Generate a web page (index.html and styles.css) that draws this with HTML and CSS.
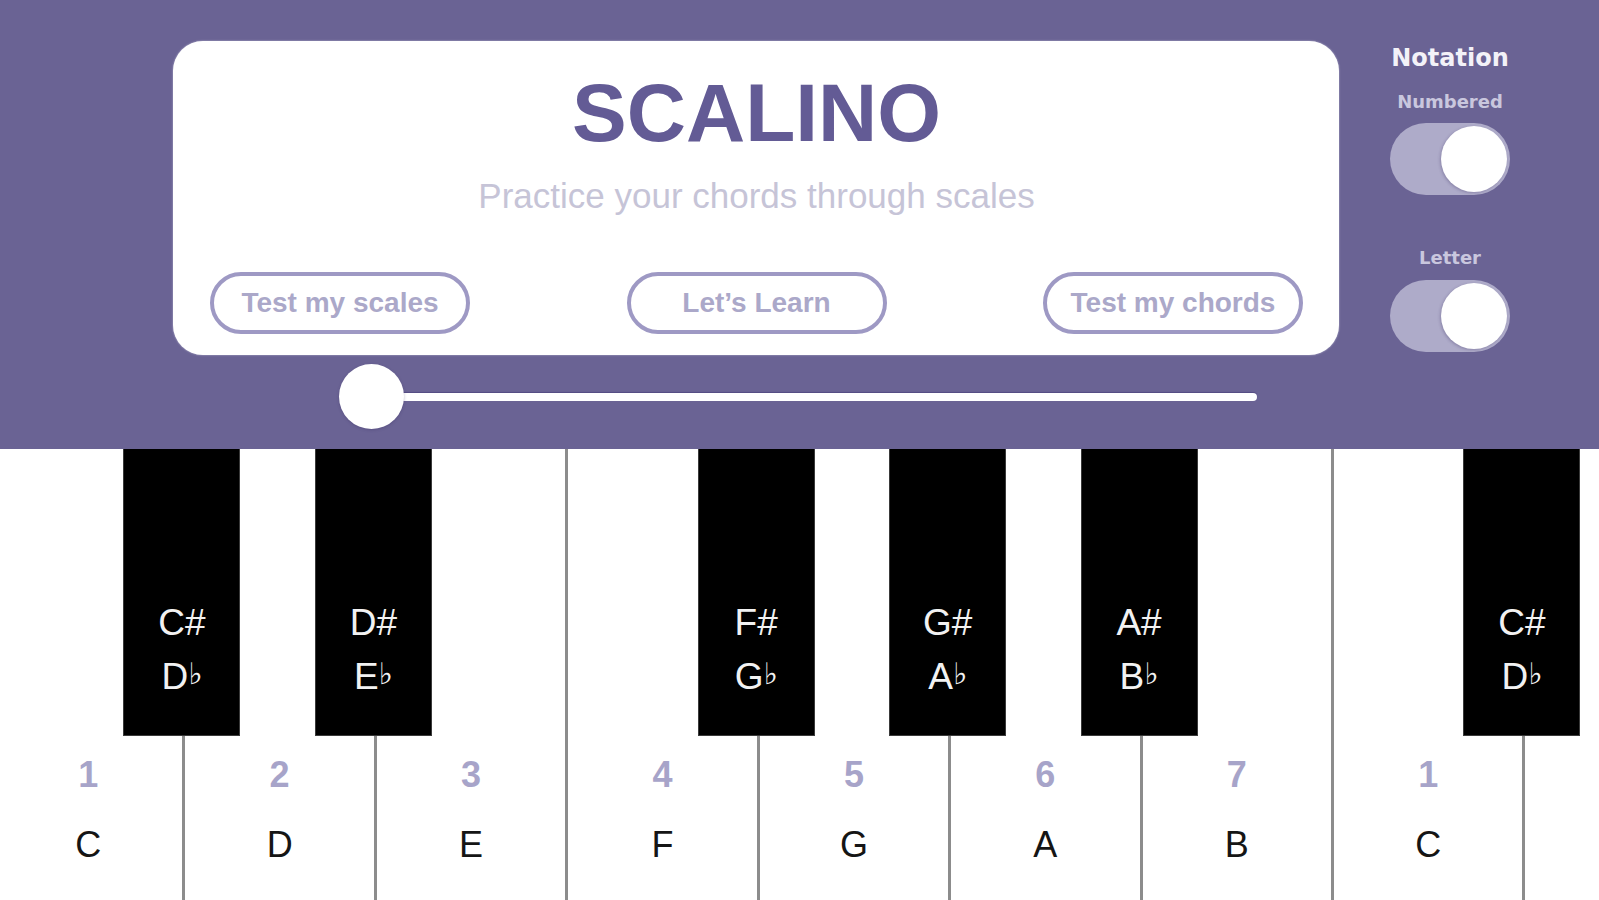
FILE: index.html
```html
<!DOCTYPE html>
<html lang="en">
<head>
<meta charset="utf-8">
<title>Scalino</title>
<link rel="stylesheet" href="styles.css">
</head>
<body>
<header class="header">
  <div class="main-col">
    <section class="card">
      <h1 class="title">SCALINO</h1>
      <p class="subtitle">Practice your chords through scales</p>
      <div class="actions">
        <button class="btn">Test my scales</button>
        <button class="btn">Let’s Learn</button>
        <button class="btn">Test my chords</button>
      </div>
    </section>
    <div class="slider">
      <div class="slider-thumb"></div>
      <div class="slider-track"></div>
    </div>
  </div>
  <aside class="side">
    <div class="side-title">Notation</div>
    <div class="side-label">Numbered</div>
    <div class="toggle"><div class="toggle-knob"></div></div>
    <div class="side-label side-label-2">Letter</div>
    <div class="toggle"><div class="toggle-knob"></div></div>
  </aside>
</header>
<main class="keyboard">
  <div class="keys">
    <div class="wkey">
      <div class="bkey"><span>C#</span><span>D<span class="flat">♭</span></span></div>
      <span class="num">1</span><span class="letter">C</span>
    </div>
    <div class="wkey">
      <div class="bkey"><span>D#</span><span>E<span class="flat">♭</span></span></div>
      <span class="num">2</span><span class="letter">D</span>
    </div>
    <div class="wkey">
      <span class="num">3</span><span class="letter">E</span>
    </div>
    <div class="wkey">
      <div class="bkey"><span>F#</span><span>G<span class="flat">♭</span></span></div>
      <span class="num">4</span><span class="letter">F</span>
    </div>
    <div class="wkey">
      <div class="bkey"><span>G#</span><span>A<span class="flat">♭</span></span></div>
      <span class="num">5</span><span class="letter">G</span>
    </div>
    <div class="wkey">
      <div class="bkey"><span>A#</span><span>B<span class="flat">♭</span></span></div>
      <span class="num">6</span><span class="letter">A</span>
    </div>
    <div class="wkey">
      <span class="num">7</span><span class="letter">B</span>
    </div>
    <div class="wkey">
      <div class="bkey"><span>C#</span><span>D<span class="flat">♭</span></span></div>
      <span class="num">1</span><span class="letter">C</span>
    </div>
    <div class="wkey wkey-partial"></div>
  </div>
</main>
</body>
</html>
```
FILE: styles.css
```css
* {
  box-sizing: border-box;
}

html, body {
  margin: 0;
  padding: 0;
  width: 1599px;
  height: 900px;
  overflow: hidden;
  background: #ffffff;
  font-family: "Liberation Sans", Arial, "DejaVu Sans", sans-serif;
}

.header {
  height: 449px;
  background: #6a6394;
  display: flex;
  align-items: flex-start;
  padding: 41px 0 0 173px;
}

.main-col {
  width: 1166px;
  flex: none;
}

.card {
  background: #ffffff;
  border-radius: 30px;
  padding: 31px 36px 21px 37px;
  box-shadow: 0 0 2px rgba(200, 198, 220, 0.9);
  display: flex;
  flex-direction: column;
  align-items: center;
}

.title {
  margin: 0;
  font-size: 82px;
  line-height: 82px;
  font-weight: 700;
  color: #635b95;
}

.subtitle {
  margin: 24px 0 0;
  font-size: 35px;
  line-height: 35px;
  color: #c6c4d7;
}

.actions {
  margin-top: 59px;
  width: 100%;
  display: flex;
  justify-content: space-between;
}

.btn {
  width: 260px;
  height: 62px;
  border: 4px solid #9e99c4;
  border-radius: 31px;
  background: #ffffff;
  font-family: "Liberation Sans", Arial, sans-serif;
  font-size: 28px;
  font-weight: 700;
  color: #aba8c9;
  padding: 0;
}

.slider {
  margin: 9px 0 0 166px;
  width: 918px;
  display: flex;
  align-items: center;
}

.slider-thumb {
  width: 65px;
  height: 65px;
  border-radius: 50%;
  background: #ffffff;
  flex: none;
  position: relative;
  z-index: 1;
  box-shadow: 0 1px 3px rgba(60, 50, 100, 0.35);
}

.slider-track {
  flex: 1;
  height: 8px;
  margin-left: -33px;
  background: #ffffff;
  border-radius: 4px;
  box-shadow: 0 -1px 1px rgba(70, 60, 120, 0.6);
}

.side {
  width: 222px;
  flex: none;
  display: flex;
  flex-direction: column;
  align-items: center;
  padding-top: 2px;
  font-family: "DejaVu Sans", Verdana, sans-serif;
}

.side-title {
  font-size: 24px;
  line-height: 30px;
  font-weight: 700;
  color: #f3f2f8;
}

.side-label {
  margin-top: 18px;
  font-size: 18px;
  line-height: 22px;
  font-weight: 700;
  color: #c9c7de;
}

.side-label-2 {
  margin-top: 52px;
}

.toggle {
  margin-top: 10px;
  width: 120px;
  height: 72px;
  border-radius: 36px;
  background: #aeabc9;
  display: flex;
  align-items: center;
  justify-content: flex-end;
  padding: 3px;
}

.side-label-2 + .toggle {
  margin-top: 11px;
}

.toggle-knob {
  width: 66px;
  height: 66px;
  border-radius: 50%;
  background: #ffffff;
  box-shadow: -1px 1px 3px rgba(60, 50, 100, 0.3);
}

.keyboard {
  width: 1599px;
  height: 451px;
  overflow: hidden;
}

.keys {
  display: flex;
  margin-left: -6px;
  height: 451px;
}

.wkey {
  position: relative;
  flex: none;
  width: 191.43px;
  height: 451px;
  border-right: 3px solid #8c8c8c;
  background: #ffffff;
  display: flex;
  flex-direction: column;
  align-items: center;
  justify-content: flex-end;
  padding-bottom: 20px;
}

.wkey-partial {
  width: 81px;
  border-right: none;
}

.num {
  font-size: 36px;
  line-height: 70px;
  font-weight: 700;
  color: #a7a4c9;
}

.letter {
  font-size: 36px;
  line-height: 70px;
  color: #151515;
}

.bkey {
  position: absolute;
  top: 0;
  right: -58px;
  z-index: 2;
  width: 117px;
  height: 287px;
  background: #000000;
  border: 1px solid #3a3a3a;
  border-top: none;
  display: flex;
  flex-direction: column;
  align-items: center;
  justify-content: flex-end;
  padding-bottom: 31px;
  color: #f2f2f2;
  font-size: 37px;
  line-height: 54px;
}

.flat {
  font-family: "DejaVu Sans", sans-serif;
  font-size: 30px;
  font-weight: 700;
  line-height: 0;
  vertical-align: 5px;
}
```
